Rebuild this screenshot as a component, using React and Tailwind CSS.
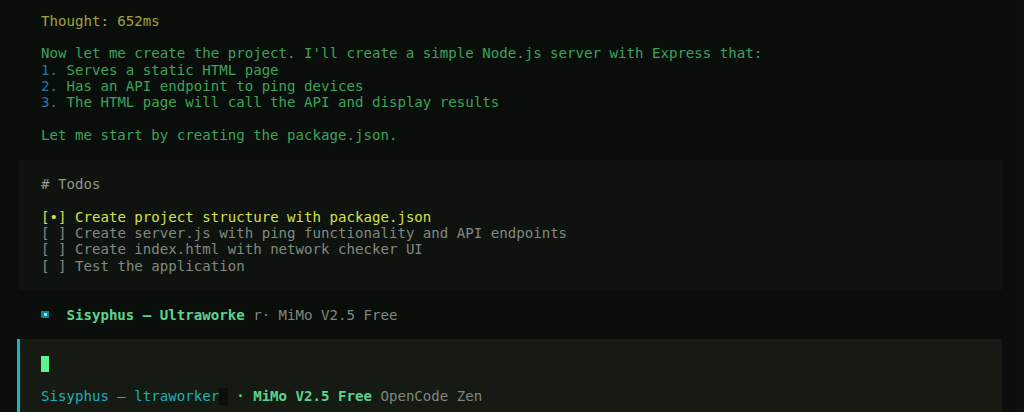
import React from 'react';

const mono = "font-['DejaVu_Sans_Mono','Liberation_Mono',monospace] text-[14.1px] leading-[16.33px]";

const Line = ({ children, className = '' }) => (
  <div className={`h-[16.33px] whitespace-pre ${className}`}>{children}</div>
);

const todos = [
  { mark: '[•]', text: 'Create project structure with package.json', active: true },
  { mark: '[ ]', text: 'Create server.js with ping functionality and API endpoints' },
  { mark: '[ ]', text: 'Create index.html with network checker UI' },
  { mark: '[ ]', text: 'Test the application' },
];

const App = () => {
  return (
    <div className={`flex h-[412px] w-full overflow-hidden bg-[#0a0e0b] ${mono}`}>
      <div className="w-[1002px] shrink-0 pt-[12.8px]">
        {/* assistant message */}
        <div className="pl-[41px]">
          <Line className="text-[#a3a23c]">Thought: 652ms</Line>
          <Line />
          <Line className="text-[#3ca35c]">
            Now let me create the project. I'll create a simple Node.js server with Express that:
          </Line>
          <Line className="text-[#3ca35c]">
            <span className="text-[#2276ad]">1.</span> Serves a static HTML page
          </Line>
          <Line className="text-[#3ca35c]">
            <span className="text-[#2276ad]">2.</span> Has an API endpoint to ping devices
          </Line>
          <Line className="text-[#3ca35c]">
            <span className="text-[#2276ad]">3.</span> The HTML page will call the API and display results
          </Line>
          <Line />
          <Line className="text-[#3ca35c]">Let me start by creating the package.json.</Line>
          <Line />
        </div>

        {/* todo panel */}
        <div className="ml-[18px] bg-[#0f130f] pl-[23px]">
          <Line />
          <Line className="text-[#8c968c]"># Todos</Line>
          <Line />
          {todos.map((t) => (
            <Line key={t.text} className={t.active ? 'text-[#d6e04c]' : 'text-[#808a80]'}>
              {t.mark} {t.text}
            </Line>
          ))}
          <Line />
        </div>

        <Line />
        {/* agent line */}
        <div className="flex h-[16.33px] items-center pl-[41px] whitespace-pre">
          <span className="flex h-[16.33px] w-[8.49px] items-center">
            <span className="flex h-[7px] w-[8px] items-center justify-center bg-[#0b8590]">
              <span className="h-[3px] w-[3px] bg-[#7fe6ea]" />
            </span>
          </span>
          <span className="font-bold text-[#5bd58b]">  Sisyphus – Ultraworke</span>
          <span className="text-[#7f887f]"> r· MiMo V2.5 Free</span>
        </div>
        <Line />

        {/* prompt box */}
        <div className="ml-[17px] h-[80px] border-l-[3px] border-[#16b6c6] bg-[#151b13] pl-[21px]">
          <Line />
          <Line>
            <span className="inline-block h-[16.33px] w-[8.49px] bg-[#5cf08e] align-top" />
          </Line>
          <Line />
          <Line>
            <span className="text-[#1cb0bd]">Sisyphus – ltraworker</span>
            <span className="inline-block h-[16.33px] w-[8.49px] bg-[#0b0f0b] align-top" />
            <span className="font-bold text-[#5bd58b]"> · MiMo V2.5 Free</span>
            <span className="text-[#7f887f]"> OpenCode Zen</span>
          </Line>
        </div>
      </div>

      {/* right gutter */}
      <div className="w-[14px] shrink-0 bg-[#0a0d0a]" />
      <div className="flex-1 bg-[#0e0f0e]" />
    </div>
  );
};

export default App;
